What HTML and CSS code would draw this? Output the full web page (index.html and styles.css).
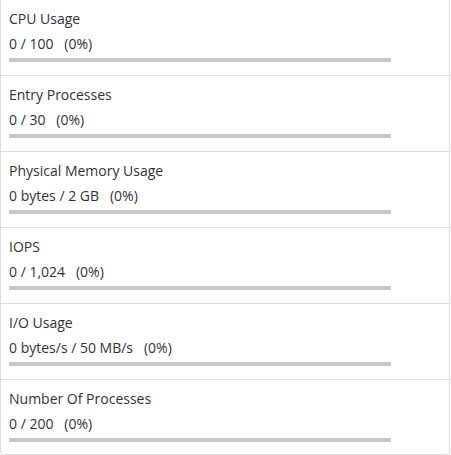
FILE: index.html
```html
<!DOCTYPE html>
<html>
<head>
<meta charset="utf-8">
<link rel="stylesheet" href="styles.css">
</head>
<body>
<div class="panel">
  <div class="row">
    <div class="title">CPU Usage</div>
    <div class="value">0 / 100&nbsp;&nbsp; (0%)</div>
    <div class="bar"><div class="fill" style="width:0%"></div></div>
  </div>
  <div class="row">
    <div class="title">Entry Processes</div>
    <div class="value">0 / 30&nbsp;&nbsp; (0%)</div>
    <div class="bar"><div class="fill" style="width:0%"></div></div>
  </div>
  <div class="row">
    <div class="title">Physical Memory Usage</div>
    <div class="value">0 bytes / 2 GB&nbsp;&nbsp; (0%)</div>
    <div class="bar"><div class="fill" style="width:0%"></div></div>
  </div>
  <div class="row">
    <div class="title">IOPS</div>
    <div class="value">0 / 1,024&nbsp;&nbsp; (0%)</div>
    <div class="bar"><div class="fill" style="width:0%"></div></div>
  </div>
  <div class="row">
    <div class="title">I/O Usage</div>
    <div class="value">0 bytes/s / 50 MB/s&nbsp;&nbsp; (0%)</div>
    <div class="bar"><div class="fill" style="width:0%"></div></div>
  </div>
  <div class="row">
    <div class="title">Number Of Processes</div>
    <div class="value">0 / 200&nbsp;&nbsp; (0%)</div>
    <div class="bar"><div class="fill" style="width:0%"></div></div>
  </div>
</div>
</body>
</html>
```

FILE: styles.css
```css
html, body {
  margin: 0;
  padding: 0;
  background: #fff;
}
body {
  font-family: "Open Sans", "Liberation Sans", sans-serif;
  font-size: 14px;
  color: #333;
}
.panel {
  width: 450px;
  box-sizing: border-box;
  border: 1px solid #ddd;
  border-top: none;
  border-radius: 0 0 4px 4px;
}
.row {
  padding: 10px 8px 13px;
  border-bottom: 1px solid #ddd;
}
.row:last-child {
  border-bottom: none;
  padding-bottom: 12px;
}
.title {
  line-height: 18px;
}
.value {
  line-height: 18px;
  margin-top: 7px;
}
.bar {
  margin-top: 5px;
  width: 382px;
  height: 4px;
  background: #c8c8c8;
}
.fill {
  height: 100%;
  background: #337ab7;
}
```
